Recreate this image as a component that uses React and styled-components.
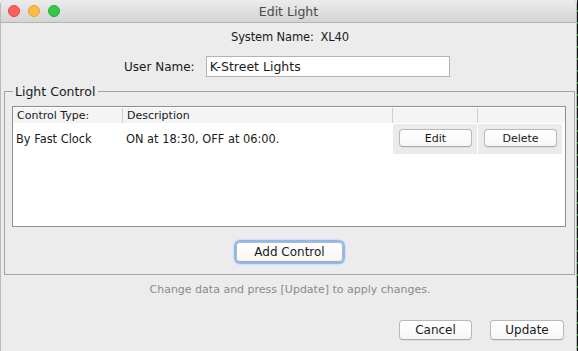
import React from "react";
import styled, { createGlobalStyle } from "styled-components";

const Global = createGlobalStyle`
  html, body { margin: 0; padding: 0; background: #ececec; }
  body { font-family: "DejaVu Sans", "Liberation Sans", sans-serif; overflow: hidden; }
  * { box-sizing: border-box; }
`;

const Screen = styled.div`
  display: flex;
  width: 578px;
  height: 351px;
  background: #ececec;
`;

const Window = styled.div`
  width: 577px;
  height: 351px;
  display: flex;
  flex-direction: column;
  background: #ececec;
  border-left: 1px solid #b9b9b9;
  border-right: 1px solid #b9b9b9;
  border-top-right-radius: 5px;
  border-top-left-radius: 5px;
  overflow: hidden;
`;

const Edge = styled.div`
  width: 1px;
  height: 351px;
  background: repeating-linear-gradient(#101010 0 10px, #1fa31f 10px 12px);
`;

const TitleBar = styled.div`
  height: 23px;
  flex: none;
  display: flex;
  align-items: center;
  position: relative;
  background: linear-gradient(#ececec, #d4d4d4);
  border-bottom: 1px solid #b4b4b4;
`;

const Lights = styled.div`
  display: flex;
  gap: 8px;
  padding-left: 7px;
`;

const Light = styled.span`
  width: 12px;
  height: 12px;
  border-radius: 50%;
  background: ${(p) => p.$c};
  border: 0.5px solid ${(p) => p.$b};
`;

const Title = styled.div`
  position: absolute;
  left: 0;
  right: 0;
  text-align: center;
  font-size: 12.5px;
  color: #4a4a4a;
`;

const Body = styled.div`
  flex: 1;
  display: flex;
  flex-direction: column;
  padding: 0 2px 0 3px;
  font-size: 12px;
  color: #1a1a1a;
`;

const SystemRow = styled.div`
  margin-top: 7px;
  height: 15px;
  line-height: 15px;
  text-align: center;
  padding-left: 2px;
  white-space: pre;
  font-size: 11.5px;
  letter-spacing: -0.15px;
`;

const UserRow = styled.div`
  margin-top: 11px;
  height: 21px;
  display: flex;
  align-items: center;
  padding-left: 120px;
  gap: 11px;
`;

const Field = styled.div`
  width: 244px;
  height: 21px;
  background: #fff;
  border: 1px solid #b4b4b4;
  padding: 0 3px;
  line-height: 19px;
  font-size: 12.5px;
`;

const Group = styled.fieldset`
  margin: 7px 0 0 0;
  width: 571px;
  border: 1px solid #a4a4a4;
  padding: 7px 8px 12px 7px;
  display: flex;
  flex-direction: column;
  align-items: center;
`;

const Legend = styled.legend`
  padding: 0 3px 0 2px;
  margin-left: 1px;
  font-size: 12.5px;
  line-height: 15px;
`;

const Table = styled.div`
  align-self: stretch;
  height: 121px;
  background: #fff;
  border: 1px solid #8e8e8e;
  padding-top: 1px;
`;

const Head = styled.div`
  display: grid;
  grid-template-columns: 110px 270px 85px 85px;
  height: 15px;
  background: #f4f4f4;
  font-size: 11px;
`;

const HeadCell = styled.div`
  padding-left: ${(p) => p.$pad || 4}px;
  line-height: 15px;
  border-right: 1px solid ${(p) => (p.$last ? "transparent" : "#d0d0d0")};
`;

const Row = styled.div`
  display: grid;
  grid-template-columns: 110px 270px 85px 85px;
  height: 30px;
  margin-top: 1px;
  font-size: 11.4px;
`;

const Cell = styled.div`
  display: flex;
  align-items: center;
  padding-left: ${(p) => p.$pad || 3}px;
`;

const BtnCell = styled.div`
  background: #ebebeb;
  margin-right: 1px;
  display: flex;
  align-items: flex-start;
  padding: 5px 5px 0 6px;
`;

const Button = styled.button`
  font-family: "DejaVu Sans", "Liberation Sans", sans-serif;
  font-size: ${(p) => p.$fs || 12}px;
  color: #1a1a1a;
  width: ${(p) => p.$w}px;
  height: ${(p) => p.$h || 21}px;
  padding: 0;
  background: linear-gradient(#ffffff, #f6f6f6);
  border: 1px solid #b8b8b8;
  border-bottom-color: #a8a8a8;
  border-radius: 4px;
  box-shadow: ${(p) =>
    p.$focus ? "0 0 0 2px #8fb8f2, 0 0 1px 3px #cfe0f8" : "0 1px 0 rgba(0,0,0,0.05)"};
`;

const AddWrap = styled.div`
  margin-top: 15px;
  padding-left: 1px;
`;

const Hint = styled.div`
  margin-top: 7px;
  text-align: center;
  color: #8a8a8a;
  font-size: 11px;
  line-height: 15px;
  padding-left: 2px;
`;

const Footer = styled.div`
  margin-top: 23px;
  display: flex;
  justify-content: flex-end;
  gap: 18px;
  padding-right: 10px;
`;

export default function App() {
  return (
    <>
      <Global />
      <Screen>
        <Window>
          <TitleBar>
            <Lights>
              <Light $c="#fc605b" $b="#de4a45" />
              <Light $c="#fdbc40" $b="#dea236" />
              <Light $c="#34c84a" $b="#27aa35" />
            </Lights>
            <Title>Edit Light</Title>
          </TitleBar>
          <Body>
            <SystemRow>System Name:  XL40</SystemRow>
            <UserRow>
              <span>User Name:</span>
              <Field>K-Street Lights</Field>
            </UserRow>
            <Group>
              <Legend>Light Control</Legend>
              <Table>
                <Head>
                  <HeadCell>Control Type:</HeadCell>
                  <HeadCell>Description</HeadCell>
                  <HeadCell />
                  <HeadCell $last />
                </Head>
                <Row>
                  <Cell $pad={3}>By Fast Clock</Cell>
                  <Cell $pad={0}>ON at 18:30, OFF at 06:00.</Cell>
                  <BtnCell>
                    <Button $w={73} $h={18} $fs={11}>Edit</Button>
                  </BtnCell>
                  <BtnCell>
                    <Button $w={73} $h={18} $fs={11}>Delete</Button>
                  </BtnCell>
                </Row>
              </Table>
              <AddWrap>
                <Button $w={107} $h={20} $focus>Add Control</Button>
              </AddWrap>
            </Group>
            <Hint>Change data and press [Update] to apply changes.</Hint>
            <Footer>
              <Button $w={73} $h={20}>Cancel</Button>
              <Button $w={74} $h={20}>Update</Button>
            </Footer>
          </Body>
        </Window>
        <Edge />
      </Screen>
    </>
  );
}
